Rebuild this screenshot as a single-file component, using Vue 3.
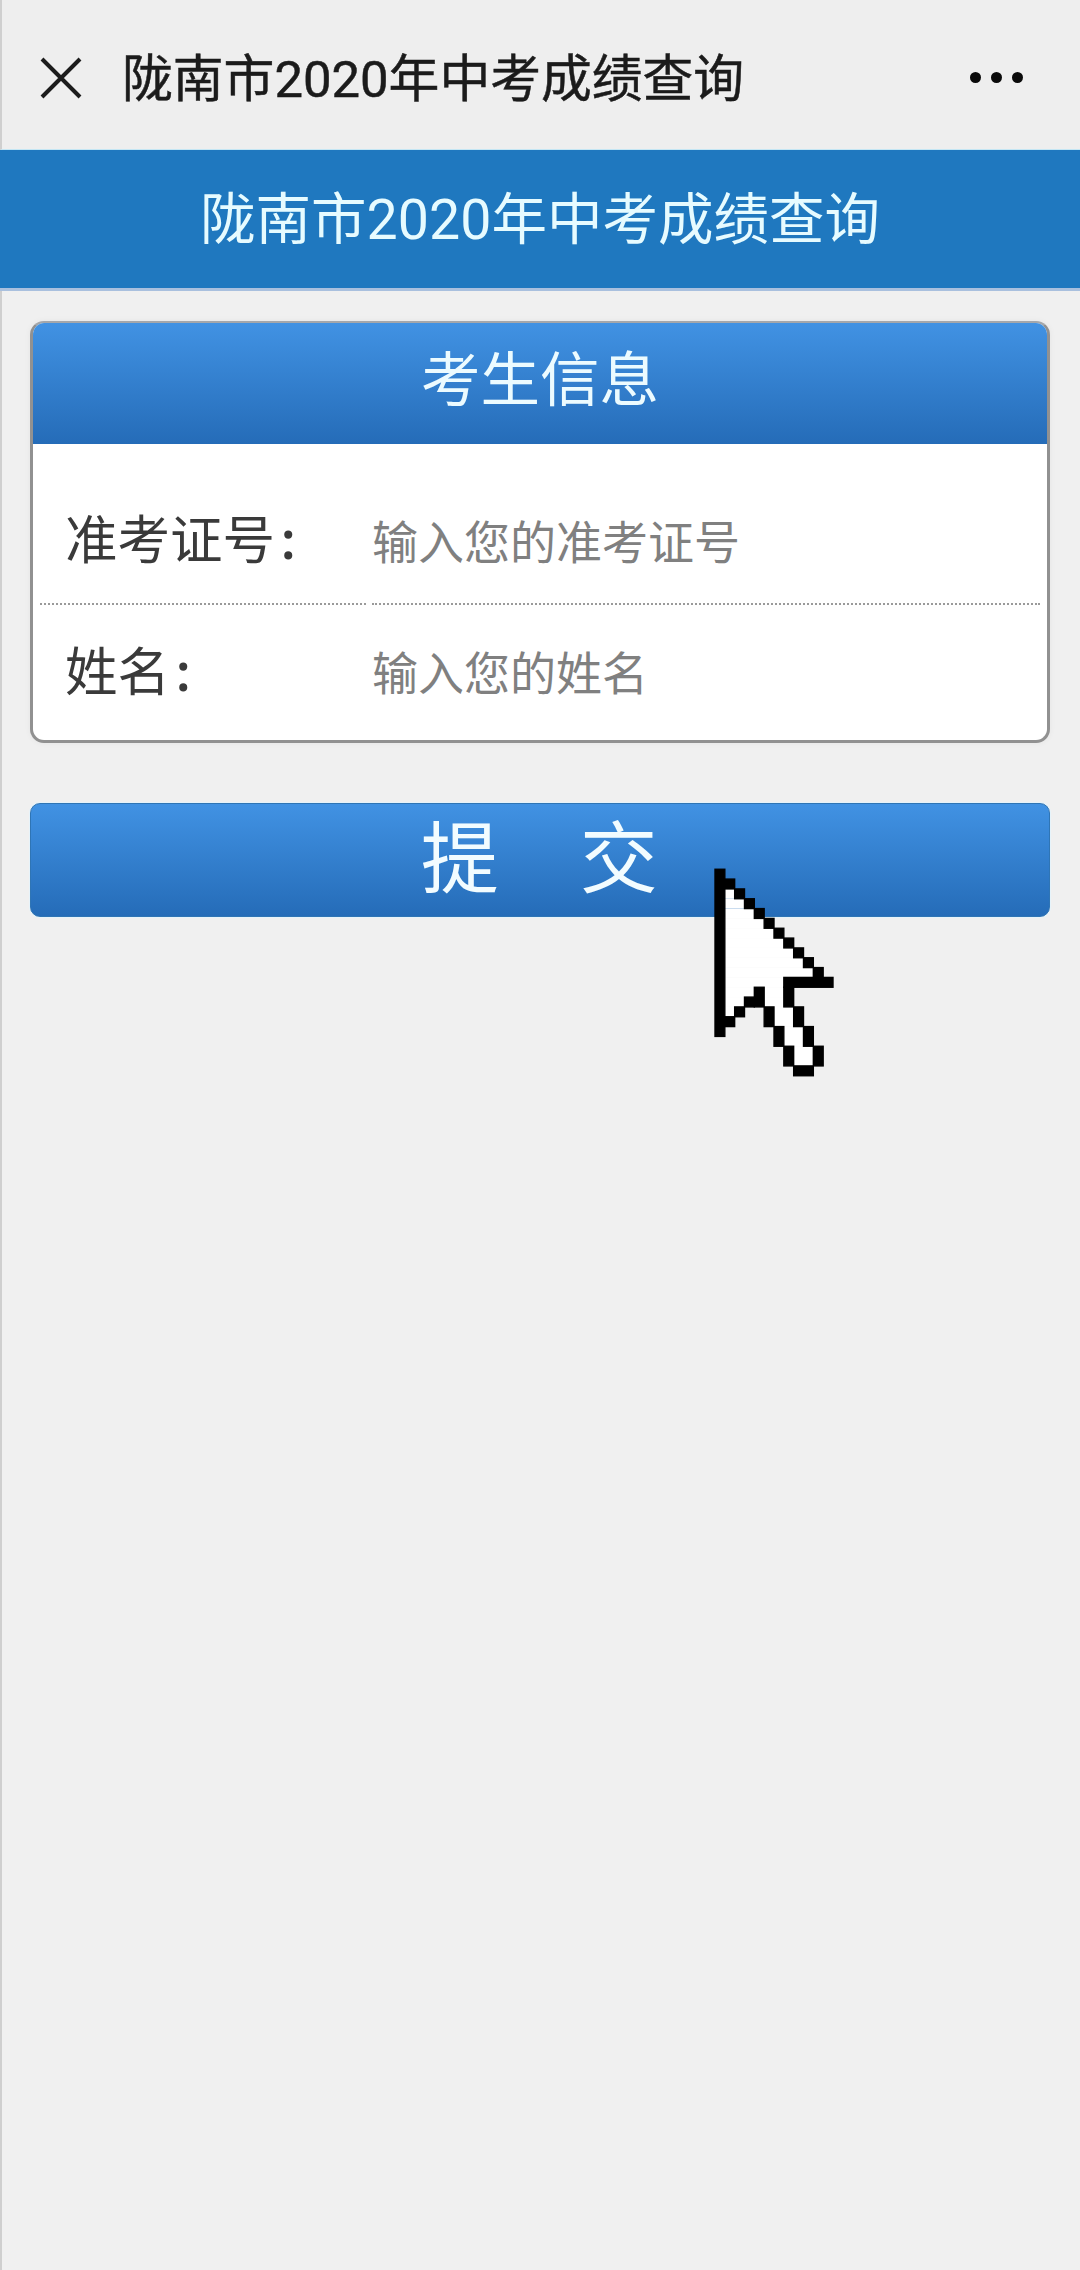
<script setup>
const title = '陇南市2020年中考成绩查询'

// Pixel-art arrow cursor: [col, row, width, height] in cursor pixels
const black = [
  [0, 0, 1, 17],
  [1, 1, 1, 1], [2, 2, 1, 1], [3, 3, 1, 1], [4, 4, 1, 1], [5, 5, 1, 1],
  [6, 6, 1, 1], [7, 7, 1, 1], [8, 8, 1, 1], [9, 9, 1, 1], [10, 10, 1, 1],
  [7, 11, 5, 1], [7, 12, 1, 2], [8, 14, 1, 2], [9, 16, 1, 2], [10, 18, 1, 2],
  [8, 20, 2, 1],
  [1, 15, 1, 1], [2, 14, 1, 1], [3, 13, 1, 1], [4, 12, 1, 2],
  [5, 14, 1, 2], [6, 16, 1, 2], [7, 18, 1, 2]
]
const white = [
  [1, 2, 1, 1], [1, 3, 2, 1], [1, 4, 3, 1], [1, 5, 4, 1], [1, 6, 5, 1],
  [1, 7, 6, 1], [1, 8, 7, 1], [1, 9, 8, 1], [1, 10, 9, 1], [1, 11, 6, 1],
  [1, 12, 3, 1], [5, 12, 2, 1], [1, 13, 2, 1], [5, 13, 2, 1], [1, 14, 1, 1],
  [6, 14, 2, 2], [7, 16, 2, 2], [8, 18, 2, 2]
]
</script>

<template>
  <div class="page">
    <header class="nav">
      <svg class="close" viewBox="0 0 42 42" aria-hidden="true">
        <path d="M2 2 L40 40 M40 2 L2 40" />
      </svg>
      <div class="nav-title">{{ title }}</div>
      <div class="more" aria-hidden="true"><i></i><i></i><i></i></div>
    </header>

    <div class="banner">{{ title }}</div>

    <main class="main">
      <section class="card">
        <div class="card-head">考生信息</div>
        <div class="card-body">
          <div class="row row-first">
            <div class="cell label">准考证号<span class="colon">:</span></div>
            <div class="cell value">输入您的准考证号</div>
          </div>
          <div class="row row-second">
            <div class="cell label">姓名<span class="colon">:</span></div>
            <div class="cell value">输入您的姓名</div>
          </div>
        </div>
      </section>

      <div class="submit">提　交</div>

      <svg class="cursor" viewBox="0 0 12 21" aria-hidden="true">
        <rect v-for="(r, i) in white" :key="'w' + i" class="px-white" :x="r[0]" :y="r[1]" :width="r[2]" :height="r[3]" />
        <rect v-for="(r, i) in black" :key="'b' + i" class="px-black" :x="r[0]" :y="r[1]" :width="r[2]" :height="r[3]" />
      </svg>
    </main>
  </div>
</template>

<style scoped>
.page {
  width: 1080px;
  height: 2270px;
  display: flex;
  flex-direction: column;
  overflow: hidden;
  background: #f0f0f0;
  font-family: Roboto, "Noto Sans CJK SC", "Noto Sans", sans-serif;
}

.nav {
  flex: none;
  display: flex;
  align-items: center;
  box-sizing: border-box;
  border-left: 2px solid #cfcfcf;
  border-bottom: 1px solid #c4e6f4;
  background: #eeeeee;
  height: 150px;
  padding-left: 38px;
}

.close {
  width: 42px;
  height: 42px;
  flex: none;
  margin-top: 6px;
}

.close path {
  fill: none;
  stroke: #1c1c1c;
  stroke-width: 4;
}

.nav-title {
  margin-left: 40px;
  margin-top: 11px;
  font-size: 50.8px;
  line-height: 60px;
  color: #1b1b1b;
  white-space: nowrap;
  -webkit-text-stroke: 0.5px #1b1b1b;
}

.more {
  margin-left: auto;
  margin-right: 57px;
  margin-top: 5px;
  display: flex;
  gap: 10px;
}

.more i {
  display: block;
  width: 11px;
  height: 11px;
  border-radius: 50%;
  background: #0a0a0a;
}

.banner {
  flex: none;
  height: 141px;
  box-sizing: border-box;
  border-bottom: 3px solid #a9c0de;
  background: #1f78bf;
  color: #e6fbff;
  font-size: 55.5px;
  line-height: 142px;
  text-align: center;
  white-space: nowrap;
}

.main {
  position: relative;
  flex: 1;
  box-sizing: border-box;
  border-left: 2px solid #cfcfcf;
  padding: 30px 30px 0 28px;
}

.card {
  box-sizing: border-box;
  height: 422px;
  border: 3px solid #919191;
  border-top: 2px solid #a4a7ab;
  border-radius: 14px;
  background: #ffffff;
  overflow: hidden;
  box-shadow: 0 0 6px rgba(0, 0, 0, 0.05);
}

.card-head {
  height: 121px;
  background: linear-gradient(#4192e3, #256cb8);
  color: #ecfbff;
  font-size: 59.5px;
  line-height: 116px;
  text-align: center;
}

.card-body {
  padding: 35px 7px 0;
}

.row {
  display: flex;
  gap: 6px;
}

.cell {
  box-sizing: content-box;
  white-space: nowrap;
}

.row-first .cell {
  height: 124px;
  border-bottom: 2px dotted #9a9a9a;
}

.row-second .cell {
  height: 134px;
}

.row-first .label {
  line-height: 120px;
}

.row-first .value {
  line-height: 128px;
}

.row-second .label {
  line-height: 132px;
}

.row-second .value {
  line-height: 138px;
}

.label {
  width: 301px;
  padding-left: 25px;
  font-size: 52.5px;
  color: #3a3a3a;
}

.colon {
  margin-left: 6px;
  font-family: "Noto Sans", sans-serif;
  font-weight: 600;
}

.value {
  flex: 1;
  font-size: 46px;
  color: #808080;
}

.submit {
  box-sizing: border-box;
  height: 114px;
  margin-top: 60px;
  border: 1px solid #2f75b5;
  border-radius: 10px;
  background: linear-gradient(#4192e3, #256cb8);
  box-shadow: 0 0 0 1px #e6f3fa;
  color: #f2fcff;
  font-size: 78px;
  letter-spacing: 1.5px;
  line-height: 114px;
  text-align: center;
}

.cursor {
  position: absolute;
  left: 713px;
  top: 578px;
  width: 118px;
  height: 207px;
  overflow: visible;
  filter: blur(0.5px);
}

.px-white {
  fill: #ffffff;
}

.px-black {
  fill: #000000;
  stroke: #000000;
  stroke-width: 0.14;
}
</style>

<style>
body {
  background: #f0f0f0;
}
</style>
